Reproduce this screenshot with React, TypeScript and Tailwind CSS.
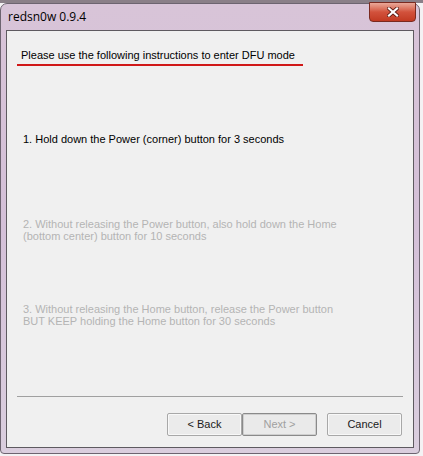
import React from "react";

const font = { fontFamily: '"Liberation Sans", Arial, sans-serif' };

const Button = ({ label, disabled, focused }: { label: string; disabled?: boolean; focused?: boolean }) => (
	<div
		className={`flex h-[23px] w-[75px] items-center justify-center rounded-[2px] border text-[11px] ${
			focused ? "border-[#8a8a8a] bg-[#eaeaea]" : "border-[#a8a8a8] bg-[#ebebeb]"
		} ${disabled ? "text-[#a0a0a0]" : "text-[#1a1a1a]"}`}
		style={{ boxShadow: focused ? "inset 0 0 0 1px #cfcfcf" : "inset 0 0 0 1px #f8f8f8" }}>
		{label}
	</div>
);

export default function App() {
	return (
		<div className="h-[456px] w-[423px] overflow-hidden bg-[#f4f2f4]" style={font}>
			<div className="h-[3px] w-full bg-[#8a7f88]" />
			<div className="flex h-[451px] w-[420px] flex-col rounded-t-[7px] rounded-b-[4px] border border-[#6d6470] bg-gradient-to-b from-[#d8c4d8] via-[#d4c0d8] to-[#dacede] px-[5px] pb-[5px]">
				{/* title bar */}
				<div className="relative flex h-[26px] items-center pl-[2px]">
					<span className="text-[12px] text-black" style={{ fontFamily: '"Open Sans", "Liberation Sans", sans-serif' }}>
						redsn0w 0.9.4
					</span>
					<div className="absolute right-[-2px] top-[-2px] flex h-[20px] w-[47px] items-center justify-center rounded-b-[4px] border border-[#7a2a20] bg-gradient-to-b from-[#e9a899] via-[#d2523c] to-[#c23a22]">
						<svg width="12" height="10" viewBox="0 0 12 10">
							<path d="M2 1.5 L10 8.5 M10 1.5 L2 8.5" stroke="#5a1a12" strokeWidth="3.8" strokeLinecap="square" />
							<path d="M2 1.5 L10 8.5 M10 1.5 L2 8.5" stroke="#ffffff" strokeWidth="2.2" strokeLinecap="square" />
						</svg>
					</div>
				</div>
				{/* client area */}
				<div className="flex flex-1 flex-col border border-[#5e5a60] bg-[#f0f0f0]">
					<div className="pl-[14px] pt-[18px]">
						<div className="text-[11px] leading-[13px] text-black">Please use the following instructions to enter DFU mode</div>
						<div className="ml-[-4px] mt-[2px] h-[2px] w-[286px] bg-[#d01818]" />
					</div>
					<div className="pl-[16px] text-[11px] leading-[12px]">
						<div className="mt-[67px] text-black">1. Hold down the Power (corner) button for 3 seconds</div>
						<div className="mt-[73px] text-[#b4b4b4]">
							2. Without releasing the Power button, also hold down the Home
							<br />
							(bottom center) button for 10 seconds
						</div>
						<div className="mt-[61px] text-[#b4b4b4]">
							3. Without releasing the Home button, release the Power button
							<br />
							BUT KEEP holding the Home button for 30 seconds
						</div>
					</div>
					<div className="flex-1" />
					<div className="mx-[10px] border-t border-[#a0a0a0]" />
					<div className="flex justify-end pb-[11px] pr-[11px] pt-[16px]">
						<Button label="< Back" />
						<Button label="Next >" disabled focused />
						<div className="w-[10px]" />
						<Button label="Cancel" />
					</div>
				</div>
			</div>
		</div>
	);
}
